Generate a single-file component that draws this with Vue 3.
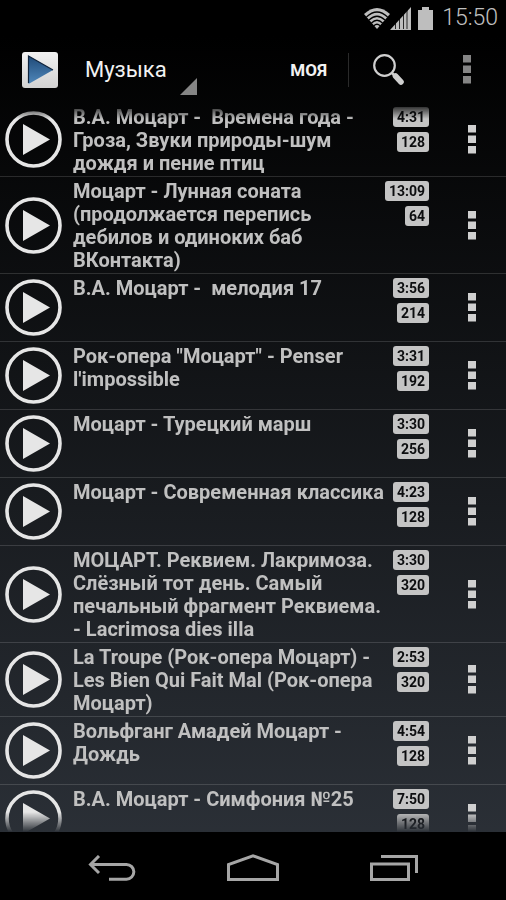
<template>
  <div class="player">
    <!-- Status bar -->
    <div class="status-bar">
      <svg class="wifi" width="26" height="21" viewBox="0 0 28 21" preserveAspectRatio="none">
        <path d="M14 21 L0 6 Q14 -6 28 6 Z" fill="#bebebe" />
        <g fill="none" stroke="#000" stroke-width="1.3">
          <path d="M2.6 9 Q14 -1 25.4 9" />
          <path d="M5.4 12 Q14 4.4 22.6 12" />
          <path d="M8 15 Q14 9.6 20 15" />
          <path d="M10.6 17.8 Q14 14.8 17.4 17.8" />
        </g>
      </svg>
      <svg class="signal" width="21" height="23" viewBox="0 0 21 23">
        <path d="M0 23 L21 0 V23 Z" fill="#bebebe" />
        <path d="M5.5 15 V22 M9.5 11 V22 M13.5 7 V22 M17 3 V22" stroke="#000" stroke-width="0.8" />
      </svg>
      <svg class="battery" width="15" height="23" viewBox="0 0 15 23">
        <path d="M4 0 H11 V3 H15 V23 H0 V3 H4 Z" fill="#bebebe" />
      </svg>
      <span class="clock">15:50</span>
    </div>

    <!-- Action bar -->
    <header class="action-bar">
      <svg class="logo" width="36" height="36" viewBox="0 0 36 36">
        <defs>
          <linearGradient id="logo-bg" x1="0" y1="0" x2="0" y2="1">
            <stop offset="0" stop-color="#f2f2f2" />
            <stop offset="1" stop-color="#d2d2d2" />
          </linearGradient>
          <linearGradient id="logo-arrow" x1="0" y1="0" x2="0" y2="1">
            <stop offset="0" stop-color="#1f4a78" />
            <stop offset="1" stop-color="#5088bb" />
          </linearGradient>
        </defs>
        <rect width="36" height="36" rx="3" fill="url(#logo-bg)" />
        <path d="M6.5 4 L31 18 L6.5 32 Z" fill="url(#logo-arrow)" />
        <path d="M6.5 31 V4 L31 18" fill="none" stroke="#10243c" stroke-width="1.2" />
      </svg>
      <div class="section">
        <select v-model="section" class="section-select" aria-label="Раздел">
          <option>Музыка</option>
        </select>
        <svg class="section-corner" width="17" height="17" viewBox="0 0 17 17">
          <path d="M17 0 V17 H0 Z" fill="#858585" />
        </svg>
      </div>
      <button class="mine">МОЯ</button>
      <button class="search" aria-label="Поиск">
        <svg width="32" height="32" viewBox="0 0 32 32">
          <circle cx="11.5" cy="11.5" r="10.3" fill="none" stroke="#cfcfcf" stroke-width="2.2" />
          <path d="M18.5 18.5 L22 22" stroke="#cfcfcf" stroke-width="2.6" />
          <path d="M22.5 22 L28 28" stroke="#cfcfcf" stroke-width="5.6" stroke-linecap="round" />
        </svg>
      </button>
      <button class="more header-more" aria-label="Ещё">
        <svg width="8" height="29" viewBox="0 0 8 29">
          <path d="M0 0h8v7.5H0z M0 10.5h8v7.5H0z M0 21h8v7.5H0z" fill="#858585" />
        </svg>
      </button>
    </header>

    <!-- Track list -->
    <ul class="tracks">
      <li v-for="(track, i) in tracks" :key="i" class="track">
        <button class="play" aria-label="Слушать">
          <svg width="57" height="57" viewBox="0 0 57 57">
            <circle cx="28.5" cy="28.5" r="26.5" fill="none" stroke="#e6e6e6" stroke-width="3.6" />
            <path d="M18 13 L45 28.5 L18 44 Z" fill="#e6e6e6" />
          </svg>
        </button>
        <div class="title">{{ track.title }}</div>
        <div class="badges">
          <span class="badge">{{ track.time }}</span>
          <span class="badge">{{ track.bitrate }}</span>
        </div>
        <button class="more" aria-label="Меню трека">
          <svg width="8" height="29" viewBox="0 0 8 29">
            <path d="M0 0h8v7.5H0z M0 10.5h8v7.5H0z M0 21h8v7.5H0z" fill="#d0d0d0" />
          </svg>
        </button>
      </li>
    </ul>

    <!-- System navigation -->
    <nav class="nav-bar">
      <button aria-label="Назад">
        <svg width="48" height="26" viewBox="0 0 48 26">
          <path d="M11 1 L2.5 9.5 L11 18 M2.5 9.5 H38.5 A7.3 7.3 0 0 1 38.5 24.2 H21" />
        </svg>
      </button>
      <button aria-label="Домой">
        <svg width="52" height="28" viewBox="0 0 52 28">
          <path d="M1.5 25.5 V10.5 L26 1.8 L50.5 10.5 V25.5 Z" />
        </svg>
      </button>
      <button aria-label="Недавние">
        <svg width="48" height="26" viewBox="0 0 48 26">
          <path d="M1.5 9 H38.5 V24.5 H1.5 Z M11 1.5 H46.5 V18" />
        </svg>
      </button>
    </nav>
  </div>
</template>

<script setup>
import { ref } from 'vue'

const section = ref('Музыка')

const tracks = [
  { title: 'В.А. Моцарт -  Времена года - Гроза, Звуки природы-шум дождя и пение птиц', time: '4:31', bitrate: 128 },
  { title: 'Моцарт - Лунная соната (продолжается перепись дебилов и одиноких баб ВКонтакта)', time: '13:09', bitrate: 64 },
  { title: 'В.А. Моцарт -  мелодия 17', time: '3:56', bitrate: 214 },
  { title: 'Рок-опера "Моцарт" - Penser l\'impossible', time: '3:31', bitrate: 192 },
  { title: 'Моцарт - Турецкий марш', time: '3:30', bitrate: 256 },
  { title: 'Моцарт - Современная классика', time: '4:23', bitrate: 128 },
  { title: 'МОЦАРТ. Реквием. Лакримоза. Слёзный тот день. Самый печальный фрагмент Реквиема. - Lacrimosa dies illa', time: '3:30', bitrate: 320 },
  { title: 'La Troupe (Рок-опера Моцарт) - Les Bien Qui Fait Mal (Рок-опера Моцарт)', time: '2:53', bitrate: 320 },
  { title: 'Вольфганг Амадей Моцарт - Дождь', time: '4:54', bitrate: 128 },
  { title: 'В.А. Моцарт - Симфония №25', time: '7:50', bitrate: 128 }
]
</script>

<style>
body {
  margin: 0;
  background: #000;
}
</style>

<style scoped>
.player {
  display: flex;
  flex-direction: column;
  height: 100vh;
  background: linear-gradient(#000 4%, #2b3037 94%);
  font-family: Roboto, 'Noto Sans', sans-serif;
  color: #c0c0c0;
}

button {
  display: flex;
  align-items: center;
  justify-content: center;
  padding: 0;
  border: none;
  background: transparent;
  font-family: inherit;
  color: inherit;
  cursor: pointer;
}

svg {
  display: block;
}

/* Status bar */
.status-bar {
  display: flex;
  flex: none;
  align-items: center;
  justify-content: flex-end;
  height: 36px;
  padding-right: 8px;
  background: #000;
}

.battery {
  margin: 0 9px 0 7px;
}

.clock {
  font-size: 23px;
  font-weight: 300;
  line-height: 36px;
}

/* Action bar */
.action-bar {
  display: flex;
  flex: none;
  align-items: center;
  height: 67px;
  padding-left: 22px;
}

.section {
  position: relative;
  width: 124px;
  margin-left: 15px;
}

.section-select {
  display: block;
  width: 100%;
  height: 50px;
  padding: 0 0 0 12px;
  border: none;
  appearance: none;
  background: transparent;
  color: #f2f2f2;
  font-family: inherit;
  font-size: 22px;
  cursor: pointer;
}

.section-corner {
  position: absolute;
  right: 0;
  bottom: 0;
  pointer-events: none;
}

.mine {
  height: 34px;
  margin-left: auto;
  padding: 0 21px;
  border-right: 1px solid #2a2a2a;
  font-size: 17px;
  font-weight: 700;
  color: #f2f2f2;
}

.search {
  width: 79px;
  height: 48px;
}

.more {
  flex: none;
  align-self: stretch;
  width: 69px;
}

.header-more {
  width: 78px;
}

/* Track list */
.tracks {
  flex: 1;
  min-height: 0;
  margin: 0;
  padding: 0;
  overflow: hidden;
  list-style: none;
  mask-image: linear-gradient(transparent, #000 16px, #000 calc(100% - 20px), transparent);
}

.track {
  display: flex;
  box-sizing: border-box;
  min-height: 68px;
  padding-left: 5px;
  border-bottom: 1px solid rgba(255, 255, 255, 0.14);
}

.play {
  flex: none;
  width: 57px;
}

.title {
  flex: 1;
  min-width: 0;
  padding: 3px 4px 1px 11px;
  font-size: 20px;
  font-weight: 700;
  line-height: 23px;
  white-space: pre-wrap;
}

.badges {
  display: flex;
  flex-direction: column;
  align-items: flex-end;
  gap: 5px;
  padding-top: 4px;
  margin-right: 8px;
}

.badge {
  padding: 0 4px;
  border-radius: 3px;
  background: #c4c4c4;
  color: #0c0d0f;
  font-size: 14px;
  font-weight: 700;
  line-height: 20px;
}

/* System navigation */
.nav-bar {
  display: flex;
  flex: none;
  box-sizing: border-box;
  height: 68px;
  padding: 4px 42px 0;
  background: #000;
}

.nav-bar button {
  flex: 1;
}

.nav-bar path {
  fill: none;
  stroke: #a6a6a6;
  stroke-width: 3;
}
</style>
